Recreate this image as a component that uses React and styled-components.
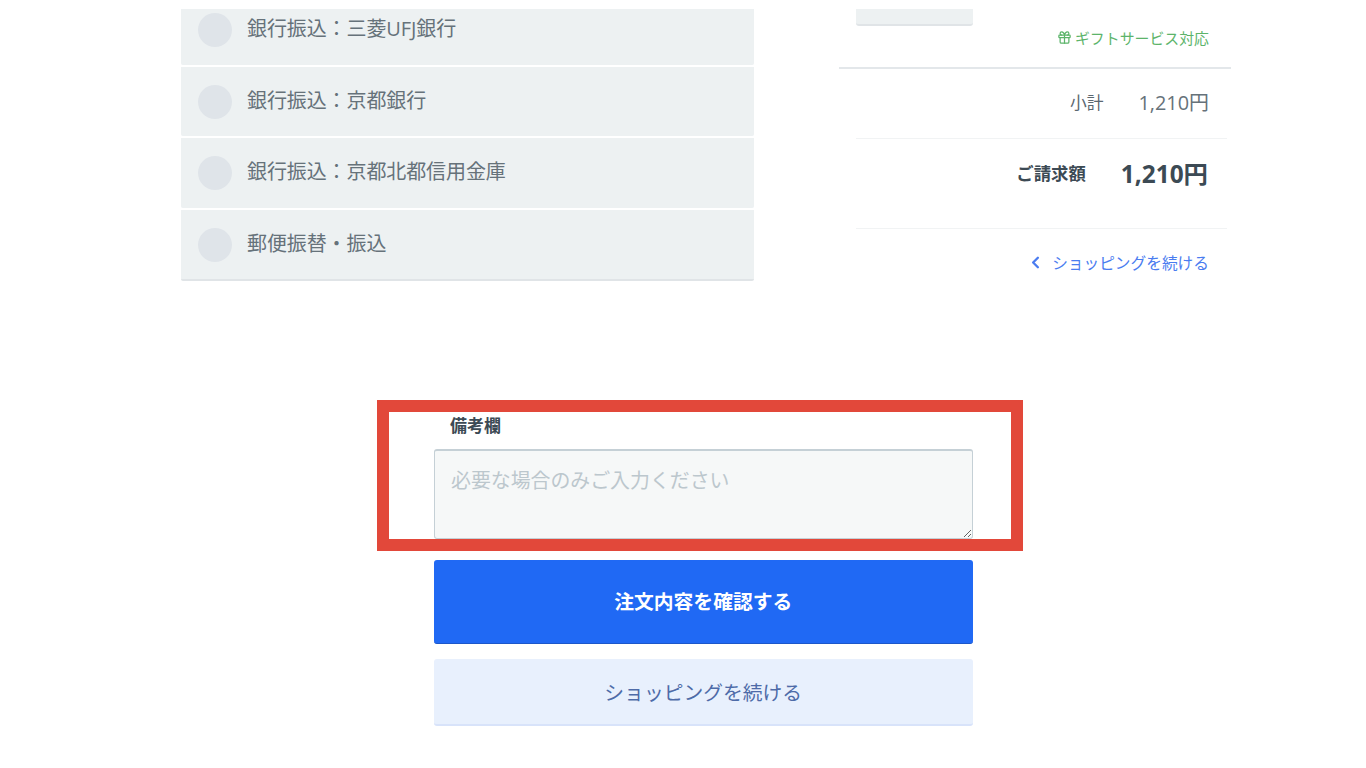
import React from 'react';
import styled, { createGlobalStyle } from 'styled-components';
import { Gift, ChevronLeft } from 'lucide-react';

const Global = createGlobalStyle`
  html, body {
    margin: 0;
    padding: 0;
    background: #fff;
    overflow: hidden;
  }
  body {
    font-family: "Open Sans", "Noto Sans CJK JP", sans-serif;
    color: #3c4a54;
  }
`;

const Page = styled.div`
  height: 768px;
  padding-top: 9px;
  box-sizing: border-box;
  overflow: hidden;
`;

const Top = styled.div`
  display: flex;
  align-items: flex-start;
  padding-left: 181px;
  height: 391px;
`;

const PayList = styled.div`
  width: 573px;
  display: flex;
  flex-direction: column;
  gap: 2px;
`;

const PayRow = styled.div`
  height: ${p => p.$h}px;
  padding-top: ${p => p.$pt}px;
  box-sizing: border-box;
  padding-left: 17px;
  display: flex;
  align-items: flex-start;
  gap: 15px;
  background: #edf1f2;
  border-bottom: ${p => (p.$last ? '2px solid #e0e4e7' : '1px solid #edf1f2')};
  border-radius: 0 0 2px 2px;
`;

const Radio = styled.span`
  width: 34px;
  height: 34px;
  border-radius: 50%;
  background: #dfe4e9;
  flex: none;
`;

const PayLabel = styled.span`
  font-size: 20px;
  line-height: 32px;
  color: #66727a;
  letter-spacing: -0.1px;
`;

const Summary = styled.div`
  width: 392px;
  margin-left: 85px;
`;

const StubBox = styled.div`
  width: 117px;
  height: 15px;
  margin-left: 17px;
  background: #edf1f2;
  border-bottom: 2px solid #e0e4e7;
  border-radius: 0 0 3px 3px;
`;

const GiftNote = styled.div`
  display: flex;
  justify-content: flex-end;
  align-items: center;
  gap: 3px;
  height: 20px;
  padding: 1px 22px 20px 0;
  font-size: 14.9px;
  color: #5cb46a;
  border-bottom: 2px solid #e3e7ea;
`;

const Rows = styled.div`
  margin: 0 4px 0 17px;
`;

const SumRow = styled.div`
  display: flex;
  justify-content: flex-end;
  align-items: center;
  box-sizing: border-box;
  height: ${p => p.$h}px;
  padding: 0 ${p => p.$pr}px ${p => p.$pb}px 0;
  border-bottom: 1px solid #f1f3f4;
`;

const SubLabel = styled.span`
  font-size: 16.8px;
  color: #5b6770;
  margin-right: 35px;
`;

const SubValue = styled.span`
  font-size: 19.9px;
  color: #66727a;
`;

const TotalLabel = styled.span`
  font-size: 17.4px;
  font-weight: 700;
  color: #3c4a54;
  margin-right: 35px;
`;

const TotalValue = styled.span`
  font-size: 24.4px;
  font-weight: 700;
  color: #3c4a54;
`;

const BackLink = styled.a`
  display: flex;
  justify-content: flex-end;
  align-items: center;
  gap: 7px;
  height: 66px;
  padding: 0 22px 2px 0;
  font-size: 15.7px;
  color: #4a7cf0;
`;

const NoteFrame = styled.div`
  width: 646px;
  height: 151px;
  margin-left: 377px;
  border: 12px solid #e2483a;
  box-sizing: border-box;
  padding-left: 45px;
  display: flex;
  flex-direction: column;
  align-items: flex-start;
`;

const NoteLabel = styled.label`
  margin-left: 16px;
  font-size: 17px;
  font-weight: 700;
  line-height: 27px;
  color: #3c4a54;
  height: 37px;
`;

const NoteArea = styled.textarea`
  width: 539px;
  height: 90px;
  box-sizing: border-box;
  margin: 0;
  padding: 15px 16px;
  border: 1px solid #c5d0d6;
  border-top-width: 2px;
  border-radius: 3px;
  background: #f6f8f8;
  font-family: inherit;
  font-size: 19.9px;
  line-height: 30px;
  outline: none;
  &::placeholder {
    color: #bcc7cd;
    opacity: 1;
  }
`;

const Actions = styled.div`
  width: 539.5px;
  margin: 9px 0 0 433.5px;
  display: flex;
  flex-direction: column;
  gap: 15px;
`;

const PrimaryButton = styled.button`
  height: 84px;
  padding: 0 0 2px;
  border: 0;
  border-bottom: 1px solid #1c57c9;
  border-radius: 3px;
  background: #2069f4;
  color: #fff;
  font-family: inherit;
  font-size: 19.8px;
  font-weight: 700;
`;

const SecondaryButton = styled.button`
  height: 67px;
  border: 0;
  border-bottom: 2px solid #d8e3fa;
  border-radius: 3px;
  background: #e8f0fd;
  color: #4e6ba8;
  font-family: inherit;
  font-size: 19.8px;
`;

const payments = [
  { label: '銀行振込：三菱UFJ銀行', h: 56, pt: 4 },
  { label: '銀行振込：京都銀行', h: 69, pt: 18 },
  { label: '銀行振込：京都北都信用金庫', h: 70, pt: 18 },
  { label: '郵便振替・振込', h: 71, pt: 18, last: true },
];

export default function App() {
  return (
    <Page>
      <Global />
      <Top>
        <PayList>
          {payments.map(p => (
            <PayRow key={p.label} $h={p.h} $pt={p.pt} $last={p.last}>
              <Radio />
              <PayLabel>{p.label}</PayLabel>
            </PayRow>
          ))}
        </PayList>
        <Summary>
          <StubBox />
          <GiftNote>
            <Gift size={15} strokeWidth={2} />
            ギフトサービス対応
          </GiftNote>
          <Rows>
            <SumRow $h={70} $pr={18} $pb={4}>
              <SubLabel>小計</SubLabel>
              <SubValue>1,210円</SubValue>
            </SumRow>
            <SumRow $h={90} $pr={19} $pb={22}>
              <TotalLabel>ご請求額</TotalLabel>
              <TotalValue>1,210円</TotalValue>
            </SumRow>
          </Rows>
          <BackLink>
            <ChevronLeft size={19} strokeWidth={3} />
            ショッピングを続ける
          </BackLink>
        </Summary>
      </Top>
      <NoteFrame>
        <NoteLabel>備考欄</NoteLabel>
        <NoteArea placeholder="必要な場合のみご入力ください" />
      </NoteFrame>
      <Actions>
        <PrimaryButton>注文内容を確認する</PrimaryButton>
        <SecondaryButton>ショッピングを続ける</SecondaryButton>
      </Actions>
    </Page>
  );
}
